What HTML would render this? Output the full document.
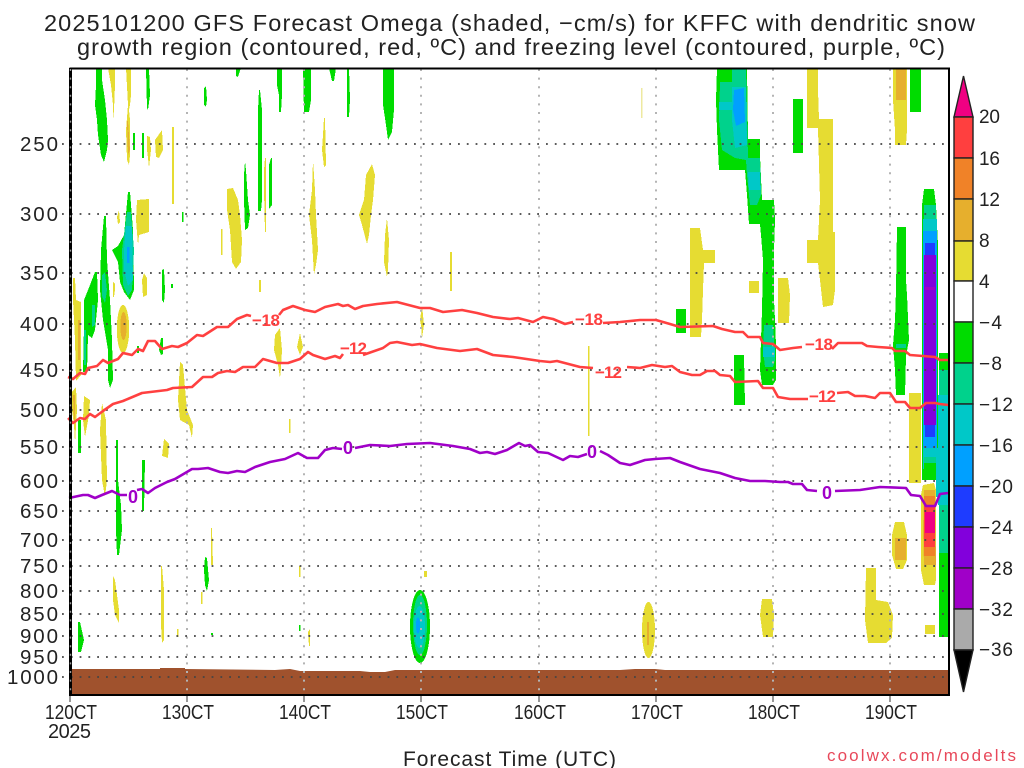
<!DOCTYPE html>
<html><head><meta charset="utf-8"><title>GFS Forecast Omega</title>
<style>
html,body{margin:0;padding:0;background:#fff}
svg{display:block}
text{font-family:"Liberation Sans",sans-serif;fill:#222}
.s polygon,.s rect,.s ellipse{shape-rendering:crispEdges}
.g{fill:#00dc00}.t{fill:#00d28c}.c{fill:#00c8c8}.b{fill:#00a0ff}.d{fill:#1e3cff}.p{fill:#8200dc}.m{fill:#a000c8}
.y{fill:#e6dc32}.o{fill:#e6af2d}.n{fill:#f08228}.r{fill:#ff3f3f}.k{fill:#f00082}
.ct{fill:none;stroke-width:2.6;stroke-linejoin:round}
.l text{font-size:20.5px}
.x text{font-size:20px}
.lr text{fill:#ff4040;font-weight:bold;font-size:17px}
.lp text{fill:#a000c8;font-weight:bold;font-size:18px}
</style></head><body>
<svg width="1024" height="768" viewBox="0 0 1024 768" xmlns="http://www.w3.org/2000/svg">
<rect width="1024" height="768" fill="#fff"/>
<text x="44" y="31" font-size="23.5" textLength="931">2025101200 GFS Forecast Omega (shaded, −cm/s) for KFFC with dendritic snow</text>
<text x="77" y="55" font-size="23.5" textLength="868">growth region (contoured, red, ºC) and freezing level (contoured, purple, ºC)</text>

<polygon points="71,669 160,669 160,668 185,668 185,669 275,670 290,669 300,671 360,671 370,672 385,672 395,670 620,670 635,669 655,669 665,670 948,670 948,694 71,694" fill="#a0522d"/>

<g class="s">
<!-- left column -->
<polygon class="g" points="96,68 102,68 102,80 105,100 107,120 108,140 107,150 104,162 101,155 98,135 97,120 95,105 96,85"/>
<polygon class="y" points="108,68 115,68 115,85 114,110 113,120 113,105 111,85"/>
<polygon class="y" points="126,68 131,68 131,95 130,105 129,110 130,120 130,155 129,165 127,160 126,130 128,105"/>
<polygon class="o" points="127,121 128,121 130,150 128,155"/>
<rect class="g" x="133" y="133" width="2" height="17"/>
<rect class="g" x="142" y="133" width="2" height="25"/>
<polygon class="y" points="147,136 150,137 151,150 149,168 148,158 147,150"/>
<polygon class="y" points="155,140 162,130 163,150 159,158 156,157"/>
<rect class="y" x="172" y="127" width="2" height="77"/>
<polygon class="g" points="146,68 149,68 150,95 148,110 147,108"/>
<polygon class="g" points="204,88 206,86 207,100 206,107 204,105"/>
<rect class="g" x="182" y="212" width="1.5" height="10"/>
<polygon class="y" points="117,217 119,210 120,222 118,224"/>
<polygon class="y" points="137,200 149,199 149,232 139,235 138,245 136,220"/>
<polygon class="g" points="128,192 130,192 133,230 134,290 130,300 124,292 120,282 118,262 112,250 118,246 124,235"/>
<polygon class="t" points="127,212 131,212 134,250 132,290 128,296 123,285 122,250"/>
<polygon class="c" points="126,226 132,226 133,280 128,286 124,270 124,250"/>
<rect class="b" x="127" y="247" width="2.5" height="16"/>
<polygon class="g" points="104,216 106,216 107,260 110,300 112,340 113,380 110,388 108,380 108,350 103,320 100,290 101,250"/>
<polygon class="t" points="102,275 105,272 107,290 105,303 102,296"/>
<polygon class="g" points="95,272 97,272 98,300 95,330 92,338 88,335 87,372 83,372 84,325 84,300 90,285"/>
<polygon class="t" points="92,305 95,305 95,325 92,327"/>
<polygon class="t" points="84,330 86,330 86,365 84,365"/>
<polygon class="y" points="73,278 75,278 76,300 81,302 81,375 76,381 75,340 73,300"/>
<polygon class="o" points="78,320 80,320 80,360 78,360"/>
<polygon class="y" points="113,282 115,284 115,290 114,297 113,297"/>
<polygon class="y" points="144,273 147,278 147,295 143,297 142,280"/>
<polygon class="g" points="162,270 164,269 165,290 164,303 162,300"/>
<rect class="g" x="171" y="284" width="2" height="4"/>
<ellipse class="y" cx="123" cy="329" rx="6.2" ry="24"/>
<ellipse class="o" cx="123.5" cy="326" rx="3.2" ry="14"/>
<rect class="g" x="137" y="346" width="2" height="7"/>
<polygon class="g" points="161,338 163,338 163,354 161,355 159,350"/>
<polygon class="y" points="72,392 76,387 77,410 75,443 74,425 72,410"/>
<polygon class="o" points="73,395 75,395 75,420 74,420"/>
<polygon class="y" points="84,396 90,400 89,415 85,437 83,420"/>
<polygon class="y" points="102,403 106,420 107,480 105,497 102,480 100,430"/>
<polygon class="y" points="180,362 183,365 187,410 193,425 192,438 189,425 180,420 178,400"/>
<polygon class="y" points="164,439 169,444 168,458 162,456"/>
<rect class="g" x="78" y="420" width="3" height="33"/>
<polygon class="g" points="116,440 118,440 118,480 121,505 122,530 119,555 117,555 116,530"/>
<polygon class="g" points="142,460 145,460 144,511 142,511"/>
<polygon class="g" points="78,622 80,622 84,640 81,652 78,652"/>
<polygon class="y" points="113,576 115,580 119,610 119,623 115,615 113,600"/>
<polygon class="y" points="161,566 162,566 164,590 164,640 162,643 161,625"/>
<rect class="y" x="177" y="629" width="1.5" height="8"/>
<polygon class="y" points="211,528 212,528 213,565 211,565"/>
<polygon class="g" points="205,557 207,558 209,580 207,591 205,585 204,570"/>
<rect class="y" x="201" y="592" width="1.5" height="12"/>
<rect class="g" x="211" y="633" width="2" height="2"/>
<rect class="y" x="299" y="566" width="1.5" height="11"/>
<rect class="g" x="299" y="625" width="1.5" height="6"/>
<polygon class="y" points="308,632 310,629 310,646 309,646"/>
<!-- upper middle -->
<polygon class="g" points="236,68 241,68 238,77 236,76"/>
<polygon class="g" points="277,68 282,68 282,95 281,112 279,112 279,95 277,85"/>
<polygon class="g" points="303,68 311,68 311,100 309,112 304,112"/>
<polygon class="g" points="329,68 336,68 334,81 332,81"/>
<polygon class="g" points="347,68 349,68 350,100 349,117 347,117"/>
<polygon class="g" points="383,68 394,68 394,110 392,132 388,140 386,125 383,105"/>
<polygon class="g" points="259,90 260,90 262,110 262,200 261,211 258,211 258,110"/>
<polygon class="g" points="245,161 246,170 248,200 250,215 248,228 245,230 244,200 244,175"/>
<polygon class="g" points="271,158 272,158 272,205 269,209 269,165"/>
<polygon class="y" points="265,158 266,158 266,232 265,232 264,190 264,170"/>
<polygon class="y" points="227,189 233,188 238,200 240,215 242,240 241,262 236,269 232,262 230,230 227,210"/>
<rect class="y" x="221" y="229" width="1.5" height="26"/>
<rect class="y" x="259" y="280" width="2" height="12"/>
<polygon class="y" points="324,118 325,118 326,165 324,167 322,150 323,135"/>
<polygon class="y" points="313,160 315,190 316,215 318,250 316,265 314,275 312,240 309,215 312,190"/>
<polygon class="y" points="372,164 375,175 373,200 371,215 369,235 367,244 362,225 359,215 364,200 366,175"/>
<polygon class="y" points="387,218 389,240 388,270 387,277 384,262 385,235"/>
<rect class="y" x="450" y="252" width="2" height="39"/>
<polygon class="y" points="422,305 424,325 422,338 421,325 420,320"/>
<polygon class="y" points="280,328 282,350 281,368 280,378 278,365 274,350 275,335"/>
<polygon class="y" points="300,333 303,347 300,355 297,347"/>
<rect class="y" x="289" y="419" width="1.5" height="14"/>
<rect class="y" x="588" y="346" width="1.5" height="90"/>
<rect x="641" y="88" width="1.5" height="30" fill="#eee9a0"/>
<rect class="y" x="424" y="571" width="3" height="6"/>
<!-- ellipses -->
<ellipse class="g" cx="420" cy="626.5" rx="10" ry="36.5"/>
<ellipse class="t" cx="420" cy="625" rx="7" ry="30"/>
<ellipse class="c" cx="419.5" cy="627" rx="5.5" ry="21"/>
<ellipse class="b" cx="418" cy="625.5" rx="2.2" ry="8"/>
<ellipse class="y" cx="648.5" cy="630" rx="6.5" ry="28"/>
<rect class="o" x="647" y="622" width="2" height="23"/>
<!-- upper right -->
<polygon class="g" points="717,68 747,68 748,139 760,139 760,156 762,200 774,200 775,220 774,250 774,300 775,320 776,345 776,380 773,385 762,385 760,370 762,310 763,260 761,235 760,224 749,224 747,195 745,170 719,170 717,130 716,100"/>
<polygon class="t" points="720,82 732,82 732,68 746,68 748,158 760,158 761,195 757,205 750,205 747,175 746,160 735,158 722,150 719,120"/>
<polygon class="c" points="732,87 746,87 747,145 735,148 732,120"/>
<polygon class="c" points="719,102 732,102 732,110 719,110"/>
<polygon class="c" points="748,172 760,172 761,190 749,190"/>
<polygon class="t" points="764,325 773,325 775,360 773,367 765,367 763,350"/>
<rect class="c" x="763" y="347" width="12" height="10"/>
<polygon class="b" points="734,90 744,88 745,122 736,126 733,110"/>
<rect class="g" x="793" y="99" width="10" height="54"/>
<polygon class="y" points="807,68 818,68 818,90 819,119 833,119 833,232 835,232 835,290 833,305 823,307 820,280 818,263 807,263 807,240 818,240 820,200 818,128 807,128"/>
<polygon class="y" points="690,228 700,228 703,250 715,250 715,263 704,263 703,290 702,320 701,337 690,337"/>
<rect class="y" x="749" y="281" width="10" height="12"/>
<polygon class="y" points="778,278 788,278 790,295 789,323 778,323"/>
<rect class="g" x="676" y="309" width="10" height="24"/>
<polygon class="g" points="734,355 744,355 745,405 734,405"/>
<!-- right -->
<polygon class="y" points="893,68 907,68 907,100 907,130 906,145 895,145 895,130 893,100"/>
<rect class="o" x="896" y="68" width="10" height="32"/>
<rect class="g" x="910" y="68" width="11" height="44"/>
<polygon class="g" points="897,227 906,227 906,280 907,295 909,340 906,356 905,395 896,395 895,370 893,345 895,320 896,290"/>
<rect class="t" x="896" y="344" width="10" height="4"/>
<polygon class="g" points="924,189 934,189 936,205 938,245 938,400 939,480 922,480 922,300 922,205"/>
<rect class="t" x="924" y="205" width="12" height="16"/>
<rect class="c" x="923" y="219" width="14" height="250"/>
<rect class="b" x="923" y="231" width="14" height="217"/>
<rect class="d" x="925" y="243" width="10" height="194"/>
<rect class="p" x="924" y="255" width="12" height="170"/>
<rect class="m" x="925" y="287" width="10" height="3"/>
<rect class="g" x="939" y="353" width="9" height="17"/>
<rect class="t" x="939" y="370" width="9" height="25"/>
<rect class="c" x="938" y="395" width="10" height="110"/>
<rect class="c" x="923" y="448" width="25" height="9"/>
<rect class="t" x="939" y="505" width="9" height="48"/>
<rect class="g" x="939" y="553" width="9" height="84"/>
<rect class="t" x="924" y="457" width="13" height="6"/>
<rect class="c" x="936" y="457" width="12" height="40"/>
<rect class="g" x="924" y="463" width="12" height="9"/>
<polygon class="y" points="909,393 921,393 921,483 909,483"/>
<polygon class="y" points="923,485 934,483 936,490 936,580 935,585 924,585 921,570 921,495"/>
<polygon class="o" points="924,490 935,490 936,565 924,565 923,530"/>
<rect class="n" x="924" y="496" width="11" height="60"/>
<rect class="r" x="924" y="505" width="11" height="42"/>
<rect class="k" x="925" y="512" width="10" height="21"/>
<polygon class="y" points="895,522 904,522 907,535 907,560 903,569 896,569 892,555 892,535"/>
<rect class="o" x="895" y="538" width="11" height="22"/>
<rect class="y" x="925" y="625" width="10" height="9"/>
<polygon class="y" points="866,568 876,568 876,600 888,602 893,615 892,638 886,643 868,643 865,620"/>
<polygon class="y" points="762,599 772,599 774,615 773,637 763,637 760,615"/>
</g>

<!-- grid -->
<g stroke="#b4b4b4" stroke-width="2" stroke-dasharray="2 6.6" fill="none">
<path d="M187 69V695M304 69V695M421 69V695M539 69V695M656 69V695M773 69V695M890 69V695"/>
</g>
<g stroke="#444" stroke-width="1.8" stroke-dasharray="1.8 7" fill="none">
<path d="M62 144H949M62 214H949M62 273H949M62 324H949M62 370H949M62 410H949M62 447H949M62 481H949M62 511H949M62 540H949M62 566H949M62 591H949M62 614H949M62 636H949M62 657H949M62 677H949"/>
</g>
<g stroke="#777" stroke-width="1.5" fill="none">
<path d="M70 695V702M187 695V702M304 695V702M421 695V702M539 695V702M656 695V702M773 695V702M890 695V702"/>
</g>

<!-- contours -->
<g class="ct" stroke="#ff4040">
<polyline points="68,377 73,379 80,373 85,374 88,368 97,366 103,360 108,363 118,359 123,353 132,355 138,349 143,351 148,341 155,341 162,349 172,346 178,347 187,343 197,335 203,336 217,327 228,327 237,319 247,315 251,316"/>
<polyline points="279,315 283,310 293,306 305,310 315,312 325,307 338,304 343,306 348,305 355,309 363,306 377,304 397,302 420,308 430,308 443,312 462,310 477,313 493,317 510,319 518,318 533,322 543,317 553,319 565,324 573,322"/>
<polyline points="603,323 620,322 640,320 656,320 670,324 680,327 713,326 722,329 735,332 743,332 748,337 760,337 763,343 773,344 780,350 793,348 802,347"/>
<polyline points="832,349 838,343 862,343 867,346 878,347 892,348 895,351 905,351 910,355 923,356 935,357 940,360 948,360"/>
<polyline points="68,418 73,423 80,418 85,419 90,414 95,417 103,411 113,404 123,401 142,393 167,390 173,388 192,387 203,377 212,377 218,373 227,371 235,372 243,367 255,367 263,359 277,363 288,363 300,359 308,352 313,355 325,359 335,356 340,358 343,354"/>
<polyline points="363,355 383,348 390,343 397,342 412,345 420,344 437,348 460,351 477,349 493,355 513,357 540,361 550,362 557,361 580,367 593,368"/>
<polyline points="627,367 640,368 652,365 665,367 672,366 680,372 692,375 700,375 707,371 715,371 720,375 730,376 735,382 758,381 763,388 773,388 778,397 790,399 808,399"/>
<polyline points="837,393 848,392 855,396 865,396 875,398 880,393 890,393 896,402 905,402 910,408 920,408 926,403 935,403 940,404 948,405"/>
</g>
<g class="ct" stroke="#a000c8">
<polyline points="69,498 83,495 88,495 95,498 102,495 112,491 120,495 127,495"/>
<polyline points="137,490 142,489 148,493 155,488 167,482 175,479 192,469 198,469 208,468 220,472 228,473 237,471 245,472 255,467 270,462 285,459 298,453 307,458 318,458 325,450 333,448 342,449"/>
<polyline points="355,448 370,445 390,446 407,444 430,443 453,446 470,449 480,453 487,452 495,454 507,450 519,443 525,446 530,445 538,452 548,453 563,460 570,456 578,457 587,454"/>
<polyline points="600,451 608,455 620,463 630,465 645,460 655,459 670,458 680,462 700,469 720,473 735,478 750,481 765,481 780,482 788,482 793,484 802,484 807,490 817,491"/>
<polyline points="835,491 860,490 880,487 906,488 911,495 920,496 926,506 935,506 940,494 948,493"/>
</g>
<g class="lr">
<text x="252" y="326" textLength="28">−18</text>
<text x="340" y="354" textLength="27">−12</text>
<text x="575" y="325" textLength="28">−18</text>
<text x="595" y="378" textLength="27">−12</text>
<text x="805" y="350" textLength="28">−18</text>
<text x="809" y="402" textLength="27">−12</text>
</g>
<g class="lp" text-anchor="middle">
<text x="133" y="503">0</text>
<text x="348" y="454">0</text>
<text x="592" y="458">0</text>
<text x="827" y="499">0</text>
</g>

<!-- frame -->
<path d="M70.5 68.5H949V695H70.5Z" fill="none" stroke="#000" stroke-width="2"/>
<path d="M70.5 68V696" stroke="#000" stroke-width="3"/>
<path d="M70.5 69V695" stroke="#999" stroke-width="1.4" stroke-dasharray="2 6.6"/>

<!-- y labels -->
<g class="l" text-anchor="end">
<text x="58" y="151" textLength="38">250</text>
<text x="58" y="221" textLength="38">300</text>
<text x="58" y="280" textLength="38">350</text>
<text x="58" y="331" textLength="38">400</text>
<text x="58" y="377" textLength="38">450</text>
<text x="58" y="417" textLength="38">500</text>
<text x="58" y="454" textLength="38">550</text>
<text x="58" y="488" textLength="38">600</text>
<text x="58" y="518" textLength="38">650</text>
<text x="58" y="547" textLength="38">700</text>
<text x="58" y="573" textLength="38">750</text>
<text x="58" y="598" textLength="38">800</text>
<text x="58" y="621" textLength="38">850</text>
<text x="58" y="643" textLength="38">900</text>
<text x="58" y="664" textLength="38">950</text>
<text x="58" y="684" textLength="51">1000</text>
</g>
<!-- x labels -->
<g class="x">
<text x="45" y="719" textLength="52" lengthAdjust="spacingAndGlyphs">120CT</text>
<text x="162" y="719" textLength="52" lengthAdjust="spacingAndGlyphs">130CT</text>
<text x="279" y="719" textLength="52" lengthAdjust="spacingAndGlyphs">140CT</text>
<text x="396" y="719" textLength="52" lengthAdjust="spacingAndGlyphs">150CT</text>
<text x="514" y="719" textLength="52" lengthAdjust="spacingAndGlyphs">160CT</text>
<text x="631" y="719" textLength="52" lengthAdjust="spacingAndGlyphs">170CT</text>
<text x="748" y="719" textLength="52" lengthAdjust="spacingAndGlyphs">180CT</text>
<text x="865" y="719" textLength="52" lengthAdjust="spacingAndGlyphs">190CT</text>
<text x="48" y="738" textLength="43">2025</text>
</g>
<text x="403" y="766" font-size="21" textLength="213">Forecast Time (UTC)</text>
<text x="827" y="761" font-size="17" textLength="189" style="fill:#e8485a">coolwx.com/modelts</text>

<!-- colorbar -->
<g stroke="#222" stroke-width="1.4">
<polygon points="963.5,76 954,117 973,117" fill="#f00082"/>
<rect x="954" y="117" width="19" height="41" fill="#ff3f3f"/>
<rect x="954" y="158" width="19" height="41" fill="#f08228"/>
<rect x="954" y="199" width="19" height="42" fill="#e6af2d"/>
<rect x="954" y="241" width="19" height="40" fill="#e6dc32"/>
<rect x="954" y="281" width="19" height="41" fill="#fff"/>
<rect x="954" y="322" width="19" height="41" fill="#00dc00"/>
<rect x="954" y="363" width="19" height="41" fill="#00d28c"/>
<rect x="954" y="404" width="19" height="41" fill="#00c8c8"/>
<rect x="954" y="445" width="19" height="41" fill="#00a0ff"/>
<rect x="954" y="486" width="19" height="41" fill="#1e3cff"/>
<rect x="954" y="527" width="19" height="41" fill="#8200dc"/>
<rect x="954" y="568" width="19" height="41" fill="#a000c8"/>
<rect x="954" y="609" width="19" height="41" fill="#aaaaaa"/>
<polygon points="954,650 973,650 963.5,692" fill="#000"/>
</g>
<g font-size="19">
<text x="979" y="123" textLength="21">20</text>
<text x="979" y="165" textLength="21">16</text>
<text x="979" y="206" textLength="21">12</text>
<text x="979" y="247">8</text>
<text x="979" y="288">4</text>
<text x="979" y="329" textLength="23">−4</text>
<text x="979" y="370" textLength="23">−8</text>
<text x="979" y="411" textLength="34">−12</text>
<text x="979" y="452" textLength="34">−16</text>
<text x="979" y="493" textLength="34">−20</text>
<text x="979" y="534" textLength="34">−24</text>
<text x="979" y="575" textLength="34">−28</text>
<text x="979" y="616" textLength="34">−32</text>
<text x="979" y="656" textLength="34">−36</text>
</g>
</svg>
</body></html>
